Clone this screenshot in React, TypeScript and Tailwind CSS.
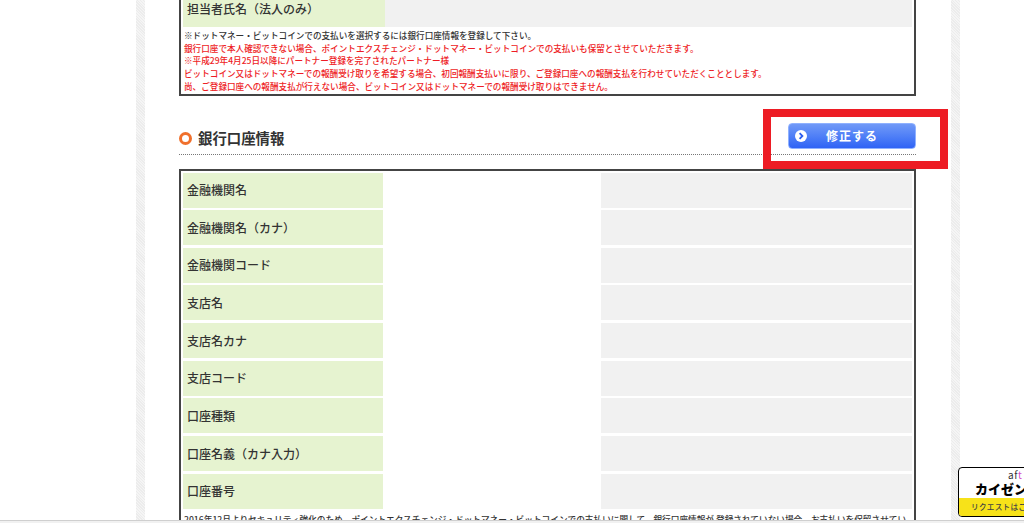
const rows = [
  '金融機関名',
  '金融機関名（カナ）',
  '金融機関コード',
  '支店名',
  '支店名カナ',
  '支店コード',
  '口座種類',
  '口座名義（カナ入力）',
  '口座番号',
];

const hatch =
  'bg-[repeating-linear-gradient(45deg,#ececec_0px,#ececec_1px,#f5f5f5_1px,#f5f5f5_2px)]';

function Notes() {
  return (
    <div className="px-[3px] pt-[2px] pb-[1px] text-[8.6px] leading-[12.7px] font-medium text-[#ee1c25]">
      <p className="text-[#333]">※ドットマネー・ビットコインでの支払いを選択するには銀行口座情報を登録して下さい。</p>
      <p>銀行口座で本人確認できない場合、ポイントエクスチェンジ・ドットマネー・ビットコインでの支払いも保留とさせていただきます。</p>
      <p>※平成29年4月25日以降にパートナー登録を完了されたパートナー様</p>
      <p>ビットコイン又はドットマネーでの報酬受け取りを希望する場合、初回報酬支払いに限り、ご登録口座への報酬支払を行わせていただくこととします。</p>
      <p>尚、ご登録口座への報酬支払が行えない場合、ビットコイン又はドットマネーでの報酬受け取りはできません。</p>
    </div>
  );
}

export default function App() {
  return (
    <div className="relative h-[523px] w-[1024px] overflow-hidden bg-white font-['Noto_Sans_CJK_JP',sans-serif] text-[#333]">
      <div className="ml-[136px] flex h-[520px] w-[824px] overflow-hidden">
        <div className={`w-[9px] shrink-0 ${hatch}`} />
        <main className="w-[806px] pl-[34px] pr-[35px]">
          {/* upper table, scrolled off the top */}
          <section className="w-[737px] border-x-2 border-b-2 border-[#444]">
            <div className="flex h-[27px] pl-[2px] pr-[2px]">
              <div className="w-[202px] bg-[#e6f3d0] pl-[4px] text-[12px] leading-[18px] font-medium">担当者氏名（法人のみ）</div>
              <div className="flex-1 bg-[#f1f1f1]" />
            </div>
            <Notes />
          </section>

          {/* section heading */}
          <div className="mt-[27px] flex h-[32px] items-center justify-between border-b border-dotted border-[#777]">
            <h2 className="flex items-center gap-[6px] text-[14.4px] font-bold">
              <span className="mt-[1px] h-[13px] w-[13px] rounded-full border-[3px] border-[#f0702c]" />
              銀行口座情報
            </h2>
            <button className="relative mb-[5px] flex h-[26px] w-[128px] items-center justify-center rounded-[4px] border border-[#8fb1ff] bg-gradient-to-b from-[#7199f7] to-[#2f63f5] text-[12px] font-bold tracking-[1px] text-white">
              <svg className="absolute left-[6px] top-[6px] h-[12px] w-[12px]" viewBox="0 0 12 12">
                <circle cx="6" cy="6" r="6" fill="#fff" />
                <path d="M4.6 3.2 7.4 6 4.6 8.8" fill="none" stroke="#2a5cf0" strokeWidth="1.8" />
              </svg>
              修正する
            </button>
          </div>

          {/* bank account table */}
          <section className="mt-[14px] w-[737px] border-2 border-[#444] pt-[2px]">
            <div className="flex flex-col gap-[2.65px] px-[2px]">
              {rows.map((label) => (
                <div key={label} className="flex h-[35px]">
                  <div className="flex w-[200px] items-center bg-[#e6f3d0] pl-[4px] text-[12px] font-medium">{label}</div>
                  <div className="w-[218px]" />
                  <div className="flex-1 bg-[#f1f1f1]" />
                </div>
              ))}
            </div>
            <p className="mt-[4px] whitespace-nowrap pl-[3px] text-[8.66px] leading-[13px] font-medium">
              2016年12月よりセキュリティ強化のため、ポイントエクスチェンジ・ドットマネー・ビットコインでの支払いに関して、銀行口座情報が 登録されていない場合、お支払いを保留させてい
            </p>
          </section>
        </main>
        <div className={`w-[9px] shrink-0 ${hatch}`} />
      </div>

      {/* bottom scrollbar edge */}
      <div className="h-[3px] border-t border-[#cfcfcf] bg-[#f1f1f1]" />

      {/* red annotation box */}
      <div className="absolute left-[763px] top-[109px] h-[60px] w-[185px] border-[8px] border-[#ed1c24]" />

      {/* floating request widget */}
      <div className="absolute left-[958px] top-[467px] h-[50px] w-[110px] overflow-hidden rounded-[4px] border border-black bg-white">
        <div className="h-[30px]">
          <div className="pl-[49px] pt-[2px] text-[10px] leading-[10px] tracking-[0.5px] text-[#333]">
            af<span className="text-[#d54cc8]">t</span>
          </div>
          <div className="whitespace-nowrap pl-[16px] pt-[1px] text-[13px] leading-[15px] font-black text-black">カイゼン</div>
        </div>
        <div className="flex h-[18px] items-center whitespace-nowrap bg-[#f7e219] pl-[12px] text-[7.6px] font-medium tracking-[0.3px] text-[#444]">
          リクエストはこちら
        </div>
      </div>
    </div>
  );
}
